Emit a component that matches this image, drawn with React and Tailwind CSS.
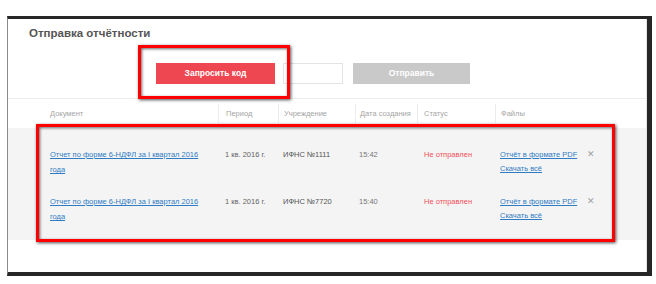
const rows = [
  { period: '1 кв. 2016 г.', office: 'ИФНС №1111', time: '15:42' },
  { period: '1 кв. 2016 г.', office: 'ИФНС №7720', time: '15:40' },
];

const cols = 'grid grid-cols-[210px_60px_77px_62px_78px_1fr]';

export default function App() {
  return (
    <div className="relative w-[656px] h-[284px] overflow-hidden bg-white pt-[16px] pl-[7px] font-['Liberation_Sans',Arial,sans-serif]">
      <div className="w-[645px] h-[260px] border-t-[3px] border-r-[5px] border-b-[4px] border-l border-t-[#262626] border-r-[#262626] border-b-[#262626] border-l-[#8a8a8a]">
        <div className="h-full border-r border-[#e6e6e6]">
          <h1 className="pt-[6px] pl-[21px] text-[11.5px] leading-[16px] font-bold text-[#555]">
            Отправка отчётности
          </h1>

          <div className="flex items-center mt-[22px] pl-[148px] h-[21px]">
            <button className="w-[119px] h-[21px] bg-[#ee4751] text-white text-[8.5px] font-bold">
              Запросить код
            </button>
            <div className="ml-[8px] w-[60px] h-[21px] border border-[#e3e3e3] bg-white" />
            <button className="ml-[10px] w-[117px] h-[21px] bg-[#c9c9c9] text-white text-[8.5px] font-bold">
              Отправить
            </button>
          </div>

          <div className={`${cols} mt-[14px] h-[30px] border-t border-[#ededed] text-[7.5px] text-[#a5a5a5]`}>
            <div className="flex items-center pl-[42px]">Документ</div>
            <div className="flex items-center pl-[7px] my-[5px] border-l border-[#ececec]">Период</div>
            <div className="flex items-center pl-[5px] my-[5px] border-l border-[#ececec]">Учреждение</div>
            <div className="flex items-center pl-[4px] my-[5px] border-l border-[#ececec]">Дата создания</div>
            <div className="flex items-center pl-[6px] my-[5px] border-l border-[#ececec]">Статус</div>
            <div className="flex items-center pl-[5px] my-[5px] border-l border-[#ececec]">Файлы</div>
          </div>

          <div className="bg-[#f4f4f4] pt-[19px] pb-[16px] flex flex-col gap-[17px] text-[7.5px] leading-[15px]">
            {rows.map((r) => (
              <div key={r.office} className={cols}>
                <div className="pl-[42px]">
                  <a className="block w-[152px] text-[#2f7cc4] underline">
                    Отчет по форме 6-НДФЛ за I квартал 2016 года
                  </a>
                </div>
                <div className="pl-[7px] text-[#666]">{r.period}</div>
                <div className="pl-[5px] text-[#555]">{r.office}</div>
                <div className="pl-[4px] text-[#777]">{r.time}</div>
                <div className="pl-[7px] text-[#f0505a]">Не отправлен</div>
                <div className="pl-[5px] flex">
                  <div className="w-[87px] flex flex-col leading-[14px] pt-[1px]">
                    <a className="text-[#2f7cc4] underline">Отчёт в формате PDF</a>
                    <a className="text-[#2f7cc4] underline">Скачать всё</a>
                  </div>
                  <span className="text-[#a0a0a0] text-[9px] leading-[15px]">✕</span>
                </div>
              </div>
            ))}
          </div>
        </div>
      </div>

      <div className="absolute left-[138px] top-[45px] w-[152px] h-[54px] border-[3px] border-[#f00] shadow-[1px_1px_3px_rgba(0,0,0,0.7),inset_1px_1px_3px_rgba(0,0,0,0.6)]" />
      <div className="absolute left-[36px] top-[124px] w-[579px] h-[118px] border-[3px] border-[#f00] shadow-[1px_1px_3px_rgba(0,0,0,0.7),inset_1px_1px_3px_rgba(0,0,0,0.6)]" />
    </div>
  );
}
